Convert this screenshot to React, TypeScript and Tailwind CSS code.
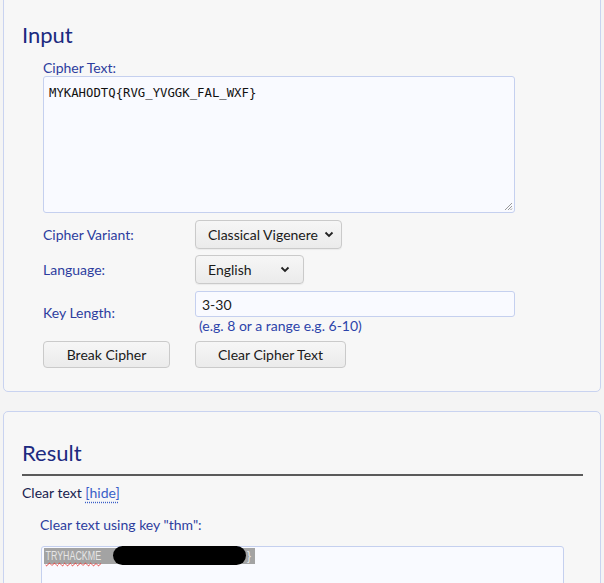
const Chevron = () => (
  <svg width="10" height="7" viewBox="0 0 10 7" className="shrink-0">
    <polyline points="1.5,1.5 5,5 8.5,1.5" fill="none" stroke="#222" strokeWidth="1.8" />
  </svg>
);

const Select = ({ label, width, pad }: { label: string; width: string; pad: string }) => (
  <div
    className={`${width} ${pad} h-[29px] flex items-center gap-[6px] pl-[12px] rounded-[4px] border border-[#cacaca] bg-gradient-to-b from-[#f6f6f6] to-[#ebebeb] text-[14px] text-[#1a1a1a] shadow-[0_1px_1px_rgba(0,0,0,0.05)]`}
  >
    <span className="whitespace-nowrap">{label}</span>
    <span className="ml-auto flex">
      <Chevron />
    </span>
  </div>
);

const Button = ({ label, width }: { label: string; width: string }) => (
  <button
    className={`${width} h-[27px] flex items-center justify-center rounded-[4px] border border-[#cacaca] bg-gradient-to-b from-[#f6f6f6] to-[#ebebeb] text-[14px] text-[#1a1a1a]`}
  >
    {label}
  </button>
);

export default function App() {
  return (
    <div className="min-h-[583px] overflow-hidden bg-[#f4f4f4] px-[3px] font-['Lato','Noto_Sans',sans-serif]">
      {/* Input panel */}
      <div className="-mt-[6px] rounded-[5px] border border-[#c9d3f0] bg-[#f7f7f7] px-[18px] pt-[26px] pb-[23px]">
        <h2 className="text-[22px] leading-[28px] text-[#1c2a80]">Input</h2>
        <div className="pl-[21px]">
          <div className="mt-[10px] text-[14px] leading-[17px] text-[#2d3d9e]">Cipher Text:</div>
          <div className="relative w-[472px] h-[137px] rounded-[3px] border border-[#c5d0ef] bg-[#f9faff] px-[5px] pt-[2px]">
            <span className="font-['DejaVu_Sans_Mono',monospace] text-[12.3px] text-[#111]">
              MYKAHODTQ{'{'}RVG_YVGGK_FAL_WXF{'}'}
            </span>
            <svg width="9" height="9" viewBox="0 0 9 9" className="absolute right-[1px] bottom-[1px]">
              <line x1="8" y1="1" x2="1" y2="8" stroke="#999" strokeWidth="1" />
              <line x1="8" y1="4" x2="4" y2="8" stroke="#999" strokeWidth="1" />
              <line x1="8" y1="6.5" x2="6.5" y2="8" stroke="#999" strokeWidth="1" />
            </svg>
          </div>

          <div className="mt-[7px] grid grid-cols-[152px_1fr] text-[14px] text-[#2d3d9e]">
            <div className="flex items-center h-[29px]">Cipher Variant:</div>
            <div>
              <Select label="Classical Vigenere" width="w-[147px]" pad="pr-[9px]" />
            </div>

            <div className="mt-[6px] flex items-center h-[29px]">Language:</div>
            <div className="mt-[6px]">
              <Select label="English" width="w-[109px]" pad="pr-[13px]" />
            </div>

            <div className="mt-[7px] flex items-center h-[42px]">Key Length:</div>
            <div className="mt-[7px]">
              <div className="w-[320px] h-[26px] flex items-center rounded-[3px] border border-[#c5d0ef] bg-[#f9faff] px-[6px] text-[#1a1a1a]">
                3-30
              </div>
              <div className="pl-[4px] h-[18px] leading-[18px] text-[#2c44aa]">(e.g. 8 or a range e.g. 6-10)</div>
            </div>

            <div className="mt-[6px]">
              <Button label="Break Cipher" width="w-[127px]" />
            </div>
            <div className="mt-[6px]">
              <Button label="Clear Cipher Text" width="w-[151px]" />
            </div>
          </div>
        </div>
      </div>

      {/* Result panel */}
      <div className="mt-[19px] h-[200px] rounded-t-[5px] border border-[#c9d3f0] bg-[#f7f7f7] pl-[18px] pr-[17px] pt-[27px]">
        <h2 className="text-[22px] leading-[28px] text-[#1c2a80]">Result</h2>
        <div className="mt-[7px] h-[2px] bg-[#5a5a5a]" />
        <div className="mt-[8px] text-[14px] leading-[18px] text-[#17224f]">
          Clear text{' '}
          <span className="text-[#3a5fc8] underline decoration-dotted decoration-[#3a5fc8] underline-offset-[4px]">[hide]</span>
        </div>
        <div className="pl-[18px]">
          <div className="mt-[14px] text-[14px] leading-[18px] text-[#2d3d9e]">Clear text using key "thm":</div>
          <div className="mt-[12px] ml-[1px] w-[523px] h-[60px] rounded-[3px] border border-[#c5d0ef] bg-[#f9faff] px-[2px] pt-[1px]">
            <div className="relative flex items-center w-[211px] h-[16px] bg-[#a3a3a3] font-['Liberation_Sans',sans-serif] text-[12px] text-[#e6e6e6]">
              <span className="inline-block origin-left scale-x-[0.74] pl-[2px] underline decoration-wavy decoration-[#e53935] decoration-[1px] underline-offset-[2px]">
                TRYHACKME
              </span>
              <span className="absolute left-[203px] top-0 leading-[16px]">{'}'}</span>
              <div className="absolute left-[69px] top-[-2px] w-[133px] h-[19px] rounded-full bg-black" />
            </div>
          </div>
        </div>
      </div>
    </div>
  );
}
